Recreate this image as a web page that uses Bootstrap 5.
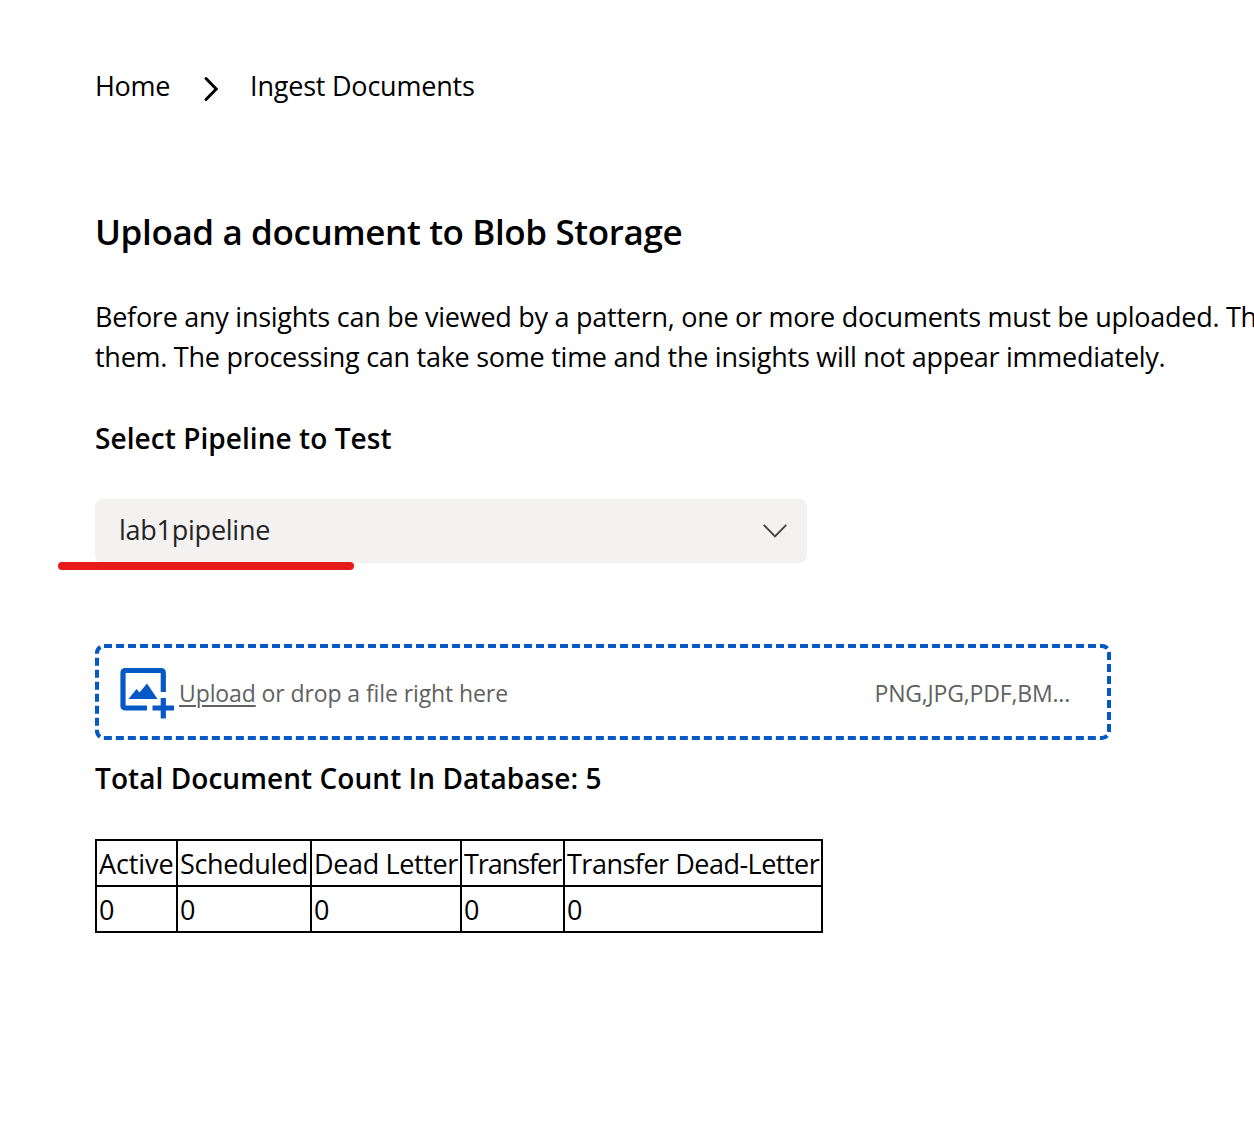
<!DOCTYPE html>
<html lang="en">
<head>
<meta charset="utf-8">
<meta name="viewport" content="width=device-width, initial-scale=1">
<title>Ingest Documents</title>
<link rel="stylesheet" href="https://cdn.jsdelivr.net/npm/bootstrap@5.3.0/dist/css/bootstrap.min.css">
<style>
body{font-family:"Open Sans","Noto Sans",sans-serif;font-size:27px;line-height:40px;color:#000;background:#fff;overflow:hidden}
.page{padding:66px 0 0 95px;height:1140px;overflow:hidden}
.crumbs{height:40px}
.crumbs svg{margin:6px 30px 0 33px}
.crumb-home{letter-spacing:-.3px}
.crumb-here{letter-spacing:-.22px}
h1,h2{font-weight:600;line-height:40px;margin:0;white-space:nowrap}
h1{font-size:35px;margin-top:106px;letter-spacing:-.38px}
h2{font-size:28px;letter-spacing:.06px}
.intro{margin:45px 0 41px;white-space:nowrap;letter-spacing:-.265px}
.picker{width:712px;height:64px;margin-top:41px;padding:0 20px 0 24px;background:#f3f2f1;border-radius:8px;color:#252423;position:relative}
.picked{padding-bottom:2px;letter-spacing:-.25px}
.marker{position:absolute;left:-37px;top:63px;width:296px;height:8px;border-radius:4px;background:#e81b1b}
.dropzone{width:1016px;height:96px;margin:81px 0 18px;color:#616161;font-size:23px}
.dropzone>svg.outline{position:absolute;inset:0}
.dropzone .inner{height:96px;padding:2px 41px 0 25px}
.dropzone u{text-underline-offset:3px;text-decoration-thickness:2px;text-decoration-skip-ink:auto}
.drop-label{letter-spacing:-.1px}
.types{letter-spacing:-.18px}
.counts{width:728px;margin-top:41px;table-layout:fixed;border-collapse:collapse}
.counts td{border:2px solid #000;height:46px;padding:2px 1px 0 2px;line-height:40px;white-space:nowrap;letter-spacing:-.5px}
.counts td:nth-child(1){letter-spacing:-.1px}
.counts td:nth-child(2),.counts td:nth-child(3){letter-spacing:-.36px}
.counts td:nth-child(4){letter-spacing:-1.05px}
</style>
<script src="https://cdn.jsdelivr.net/npm/bootstrap@5.3.0/dist/js/bootstrap.bundle.min.js"></script>
</head>
<body>
<main class="page">
  <nav class="crumbs d-flex align-items-center" aria-label="breadcrumb">
    <span class="crumb-home">Home</span>
    <svg width="17" height="28" viewBox="0 0 17 28" fill="none" stroke="#000" stroke-width="3" stroke-linecap="round"><path d="M3 3.5 13.2 14 3 24.5"/></svg>
    <span class="crumb-here">Ingest Documents</span>
  </nav>
  <h1>Upload a document to Blob Storage</h1>
  <p class="intro">Before any insights can be viewed by a pattern, one or more documents must be uploaded. The<br>them. The processing can take some time and the insights will not appear immediately.</p>
  <h2>Select Pipeline to Test</h2>
  <div class="picker d-flex align-items-center justify-content-between">
    <span class="picked">lab1pipeline</span>
    <svg width="24" height="14" viewBox="0 0 24 14" fill="none" stroke="#484644" stroke-width="2"><path d="M.7.9 12 12.4 23.3.9"/></svg>
    <span class="marker"></span>
  </div>
  <div class="dropzone position-relative">
    <svg class="outline" width="1016" height="96" fill="none" stroke="#0658c7" stroke-width="4"><rect x="2" y="2" width="1012" height="92" rx="7" stroke-dasharray="8 4"/></svg>
    <div class="inner d-flex align-items-center justify-content-between">
      <div class="d-flex align-items-center">
        <svg class="me-1" width="55" height="52" viewBox="0 0 55 52"><path d="M43.300 25V6Q43.300 3.500 40.800 3.500H5.500Q3 3.500 3 6V38.500Q3 41 5.500 41H27M32.500 41H54M43.300 31V51.500" fill="none" stroke="#0658c7" stroke-width="5.200"/><path d="M8.500 32 16.500 22 19.500 25.500 27 16.500 37.500 32Z" fill="#0658c7"/></svg>
        <span class="drop-label"><u>Upload</u> or drop a file right here</span>
      </div>
      <span class="types">PNG,JPG,PDF,BM...</span>
    </div>
  </div>
  <h2>Total Document Count In Database: 5</h2>
  <table class="counts">
    <colgroup><col style="width:81px"><col style="width:134px"><col style="width:150px"><col style="width:103px"><col style="width:258px"></colgroup>
    <tbody>
      <tr><td>Active</td><td>Scheduled</td><td>Dead Letter</td><td>Transfer</td><td>Transfer Dead-Letter</td></tr>
      <tr><td>0</td><td>0</td><td>0</td><td>0</td><td>0</td></tr>
    </tbody>
  </table>
</main>
</body>
</html>
